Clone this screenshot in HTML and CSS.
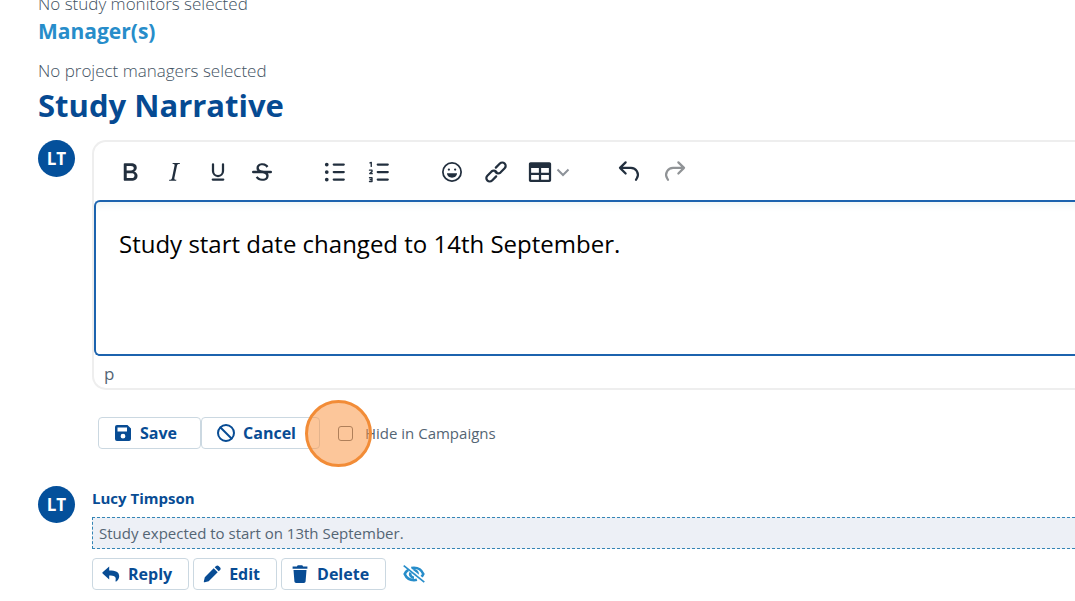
FILE: index.html
```html
<!DOCTYPE html>
<html lang="en">
<head>
<meta charset="utf-8">
<meta name="viewport" content="width=device-width, initial-scale=1">
<title>Study Narrative</title>
<link rel="stylesheet" href="styles.css">
</head>
<body>
<main class="page">
  <p class="note">No study monitors selected</p>
  <h2 class="subheading">Manager(s)</h2>
  <p class="note">No project managers selected</p>
  <h1 class="heading">Study Narrative</h1>

  <section class="entry composer">
    <div class="avatar">LT</div>
    <div class="entry-body">
      <div class="editor">
        <div class="toolbar" role="toolbar" aria-label="Formatting">
          <div class="group">
            <button class="tool" aria-label="Bold"><svg viewBox="0 0 24 24"><path fill-rule="evenodd" d="M7.8 19c-.3 0-.5 0-.6-.2l-.2-.5V5.7c0-.2 0-.4.2-.5l.6-.2h5c1.5 0 2.7.3 3.5 1 .7.6 1.1 1.4 1.1 2.5a3 3 0 0 1-.6 1.9c-.4.6-1 1-1.6 1.2.4.1.9.3 1.3.6s.8.7 1 1.2c.4.4.5 1 .5 1.6 0 1.3-.4 2.3-1.3 3-.8.7-2.1 1-3.8 1H7.8Zm5-8.3c.6 0 1.2-.1 1.6-.5.4-.3.6-.7.6-1.3 0-1.1-.8-1.7-2.3-1.7H9.3v3.5h3.4Zm.5 6c.7 0 1.3-.1 1.7-.4.4-.4.6-.9.6-1.5s-.2-1-.7-1.4c-.4-.3-1-.4-2-.4H9.4v3.8h4Z"/></svg></button>
            <button class="tool" aria-label="Italic"><svg viewBox="0 0 24 24"><path d="m16.7 4.7-.1.9h-.3c-.6 0-1 0-1.4.3-.3.3-.4.6-.5 1.1l-2.1 9.8v.6c0 .5.4.8 1.4.8h.2l-.2.8H8l.2-.8h.2c1.1 0 1.8-.5 2-1.5l2-9.8.1-.5c0-.6-.4-.8-1.4-.8h-.3l.2-.9h5.8Z"/></svg></button>
            <button class="tool" aria-label="Underline"><svg viewBox="0 0 24 24" class="line"><path stroke-width="1.8" d="M8 5.8v5.4a4 4 0 0 0 8 0V5.8M7.800 18h8.400"/></svg></button>
            <button class="tool" aria-label="Strikethrough"><svg viewBox="0 0 24 24"><path d="M15.6 8.5c-.5-.7-1-1.1-1.3-1.3-.6-.4-1.3-.6-2-.6-2.7 0-2.8 1.7-2.8 2.1 0 1.6 1.8 2 3.2 2.3 4.4.9 4.6 2.8 4.6 3.9 0 1.4-.7 4.1-5 4.1A6.2 6.2 0 0 1 7 16.4l1.5-1.1c.4.6 1.6 2 3.7 2 1.6 0 2.5-.4 3-1.2.4-.8.3-2-.8-2.6-.7-.4-1.6-.7-2.9-1-1-.2-3.900-.8-3.900-3.600C7.600 6 10.300 5 12.400 5c2.900 0 4.200 1.600 4.700 2.400l-1.500 1.100Z"/><path d="M5 11h14a1 1 0 0 1 0 2H5a1 1 0 0 1 0-2Z"/></svg></button>
          </div>
          <div class="group">
            <button class="tool" aria-label="Bullet list"><svg viewBox="0 0 24 24" class="line"><path stroke-width="1.8" d="M11 6H19M11 12H19M11 18H19"/><path stroke-width="3" d="M5.400 6h.01M5.400 12h.01M5.400 18h.01"/></svg></button>
            <button class="tool" aria-label="Numbered list"><svg viewBox="0 0 24 24" class="line"><path stroke-width="1.8" d="M11 6H19M11 12H19M11 18H19"/><path stroke-width="1.1" d="M4.800 4.700l1-.4v3.200M4.400 10.500h2v1.200l-1.800 1.600h2M4.400 16.600h2v3H4.400M4.900 18.100h1.500"/></svg></button>
          </div>
          <div class="group">
            <button class="tool" aria-label="Emojis"><svg viewBox="0 0 24 24"><circle cx="12" cy="12" r="7.300" fill="none" stroke="currentColor" stroke-width="1.4"/><circle cx="9.500" cy="10" r=".9"/><circle cx="14.500" cy="10" r=".9"/><path d="M8 13h8c0 2-1.800 3.500-4 3.500s-4-1.500-4-3.500Z"/></svg></button>
            <button class="tool" aria-label="Link"><svg viewBox="0 0 24 24" class="line"><g transform="rotate(-45 12 12)" stroke-width="1.8"><path d="M9.600 14.600H5a2.700 2.700 0 0 1 0-5.400h4.800a2.700 2.700 0 0 1 2.500 3"/><path d="M14.400 9.400H19a2.700 2.700 0 0 1 0 5.400h-4.800a2.700 2.700 0 0 1-2.500-3"/></g></svg></button>
            <button class="tool tool-menu" aria-label="Table"><svg viewBox="0 0 24 24"><path fill-rule="evenodd" d="M4.500 4.100h15c.8 0 1.400.6 1.400 1.400v13c0 .8-.6 1.400-1.400 1.400h-15c-.8 0-1.400-.6-1.400-1.400v-13c0-.8.6-1.400 1.400-1.400ZM4.900 8.800v3.800h6.200V8.800Zm8 0v3.800h6.200V8.800Zm-8 5.500v3.800h6.200v-3.800Zm8 0v3.800h6.200v-3.800Z"/></svg><svg class="chevron" viewBox="0 0 14 14"><path d="M1.500 4.500 7 10l5.500-5.500"/></svg></button>
          </div>
          <div class="group group-history">
            <button class="tool" aria-label="Undo"><svg viewBox="0 0 24 24" class="line"><path stroke-width="1.8" d="M9.300 4.300 4.800 8.700l4.500 4.500M4.800 8.700h8.700a5.500 5.500 0 0 1 4.800 8.300l-.7 1.200"/></svg></button>
            <button class="tool tool-off" aria-label="Redo" disabled><svg viewBox="0 0 24 24" class="line"><path stroke-width="1.8" d="M14.700 4.300l4.500 4.400-4.500 4.500M19.200 8.700h-8.700A5.500 5.500 0 0 0 5.700 17l.7 1.200"/></svg></button>
          </div>
        </div>
        <textarea class="content" aria-label="Narrative" spellcheck="false">Study start date changed to 14th September.</textarea>
        <div class="statusbar">p</div>
      </div>
      <div class="submit">
        <button class="btn"><svg viewBox="0 0 18 18"><path fill-rule="evenodd" d="M3 1h10.500L17 4.500V15a2 2 0 0 1-2 2H3a2 2 0 0 1-2-2V3a2 2 0 0 1 2-2Zm.5 2.500V7.500h9.500v-4Zm5.500 6.300a2.400 2.400 0 1 0 0 4.800 2.400 2.400 0 0 0 0-4.800Z"/></svg>Save</button>
        <button class="btn"><svg viewBox="0 0 18 18" class="line"><circle cx="9" cy="9" r="8" stroke-width="2"/><path stroke-width="2" d="m3.500 3.500 11 11"/></svg>Cancel</button>
        <label class="hide-option"><span class="tick"><input type="checkbox"><span class="click-mark"></span></span>Hide in Campaigns</label>
      </div>
    </div>
  </section>

  <article class="entry comment">
    <div class="avatar">LT</div>
    <div class="entry-body">
      <h3 class="author">Lucy Timpson</h3>
      <p class="message">Study expected to start on 13th September.</p>
      <div class="actions">
        <button class="btn btn-small"><svg viewBox="0 0 18 18"><path d="M7.200 1.500v3.900c6.500 0 10 1.500 10 5.900 0 2.300-1.200 4-2.900 5.200-.5.300-.9-.1-.8-.6 1.200-4.400-1.500-5.300-6.300-5.300v4L.6 8.500c-.4-.4-.4-.8 0-1.200Z"/></svg>Reply</button>
        <button class="btn btn-small"><svg viewBox="0 0 18 18"><path d="m10.700 3.300 4 4-9 9-4 1c-.6.1-1-.3-.9-.9l1-4.200ZM11.700 2.300l1.400-1.400c.7-.7 1.800-.7 2.500 0l1.500 1.500c.7.7.7 1.800 0 2.500l-1.400 1.400Z"/></svg>Edit</button>
        <button class="btn btn-small"><svg viewBox="0 0 18 18"><path d="M1.600 1.500h4.300l.8-1.300h4.600l.8 1.300h4.300v2.200H1.600ZM2.500 5h13l-.9 11.300c-.1 1-.8 1.600-1.700 1.600H5.100c-.9 0-1.600-.6-1.700-1.600Z"/></svg>Delete</button>
        <button class="visibility" aria-label="Hidden in campaigns"><svg viewBox="0 0 22 18"><g fill="none" stroke="currentColor" stroke-width="2.600"><path d="M5.300 4.800C3.600 5.900 2.400 7.400 1.700 9c1.500 3.500 5 6.200 9.300 6.200 1 0 2-.1 2.900-.4M8.300 3.100C9.200 2.900 10 2.800 11 2.800c4.300 0 7.800 2.700 9.300 6.200-.5 1.200-1.300 2.300-2.300 3.200"/><path d="M7.300 7.500C6.600 10 8.300 12.600 11 12.700M9.600 5.600c2.800-1 5.700 1.100 5.200 4.200"/></g><path d="M10.600 6.900a2.200 2.200 0 0 1 2.400 2.500Z"/><path fill="none" stroke="#fff" stroke-width="1.400" d="M2.200-.2 22 15.400"/><path fill="none" stroke="currentColor" stroke-width="1.700" d="M.7.700 21.300 17.200"/></svg></button>
      </div>
    </div>
  </article>
</main>
</body>
</html>
```
FILE: styles.css
```css
* { box-sizing: border-box; }
body {
  margin: 0;
  background: #fff;
  color: #546574;
  font-family: "Open Sans", "Noto Sans", sans-serif;
  font-size: 17px;
  line-height: 24px;
  overflow: hidden;
}
h1, h2, h3, p { margin: 0; }
button {
  font: inherit;
  border: 0;
  padding: 0;
  background: none;
}
svg { display: block; fill: currentColor; flex: none; overflow: visible; }
svg.line { fill: none; stroke: currentColor; stroke-linecap: round; stroke-linejoin: round; }

.page { margin-top: -8px; padding-left: 38px; }
.note { color: #3f5262; font-weight: 300; }
.subheading {
  margin-bottom: 12px;
  color: #278dca;
  font-size: 21px;
  line-height: 31px;
  font-weight: 700;
}
.heading {
  color: #064a92;
  font-size: 31px;
  line-height: 44px;
  font-weight: 700;
}

.entry { display: flex; gap: 17px; }
.entry-body { flex: 1; min-width: 0; }
.composer { margin-top: 13px; }
.comment { margin-top: 37px; }
.avatar {
  flex: none;
  width: 37px;
  height: 37px;
  border-radius: 50%;
  background: #04509b;
  color: #fff;
  font-size: 17px;
  line-height: 37px;
  font-weight: 700;
  text-align: center;
}

.editor {
  border: 2px solid #eee;
  border-right: 0;
  border-radius: 14px 0 0 14px;
}
.toolbar {
  display: flex;
  align-items: center;
  gap: 29px;
  height: 58px;
  padding: 2px 14px 0;
}
.group { display: flex; align-items: center; }
.group-history { gap: 2px; }
.tool {
  display: flex;
  align-items: center;
  justify-content: center;
  width: 44px;
  height: 44px;
  color: #222f3e;
}
.tool svg { width: 30px; height: 30px; }
.tool-menu { width: 60px; gap: 1px; padding-right: 2px; }
.tool-off { color: #909396; }
.tool .chevron {
  width: 14px;
  height: 14px;
  fill: none;
  stroke: #8d9299;
  stroke-width: 2;
}
.content {
  display: block;
  width: 100%;
  height: 156px;
  padding: 25px 23px;
  border: 2px solid #1c63ae;
  border-right: 0;
  border-radius: 6px 0 0 6px;
  outline: 0;
  resize: none;
  box-shadow: inset 0 10px 10px -8px #eaf3f3;
  color: #000;
  font-family: "Open Sans", "Noto Sans", sans-serif;
  font-size: 24px;
  line-height: 34px;
}
.statusbar { padding: 6px 10px 2px; }

.submit {
  display: flex;
  align-items: center;
  padding: 27px 0 0 6px;
}
.btn {
  display: flex;
  align-items: center;
  gap: 8px;
  height: 32px;
  padding: 0 23px 0 15px;
  border: 1px solid #cbd8e1;
  border-radius: 4px;
  color: #084c94;
  font-size: 16px;
  font-weight: 700;
}
.btn svg { width: 18px; height: 18px; }
.btn-small { padding: 0 16px 0 9px; }
.hide-option {
  display: flex;
  align-items: center;
  gap: 12px;
  margin-left: 18px;
  font-size: 15px;
}
.tick { position: relative; width: 15px; height: 15px; }
.tick input {
  display: block;
  appearance: none;
  width: 15px;
  height: 15px;
  margin: 0;
  border: 1px solid #5f6b78;
  border-radius: 3px;
}
.click-mark {
  position: absolute;
  top: -26px;
  left: -33px;
  width: 67px;
  height: 67px;
  border: 3px solid #f28c37;
  border-radius: 50%;
  background: rgba(249, 145, 62, 0.52);
  pointer-events: none;
}

.author {
  color: #084c94;
  font-size: 15px;
  line-height: 24px;
  font-weight: 700;
}
.message {
  margin-top: 7px;
  padding: 3px 6px;
  border: 1px dashed #3485b5;
  border-right: 0;
  background: #edf0f6;
}
.message { font-size: 15px; }
.actions { display: flex; align-items: center; gap: 4px; margin-top: 9px; }
.visibility { margin-left: 13px; color: #278dca; }
.visibility svg { width: 22px; height: 18px; }
```
